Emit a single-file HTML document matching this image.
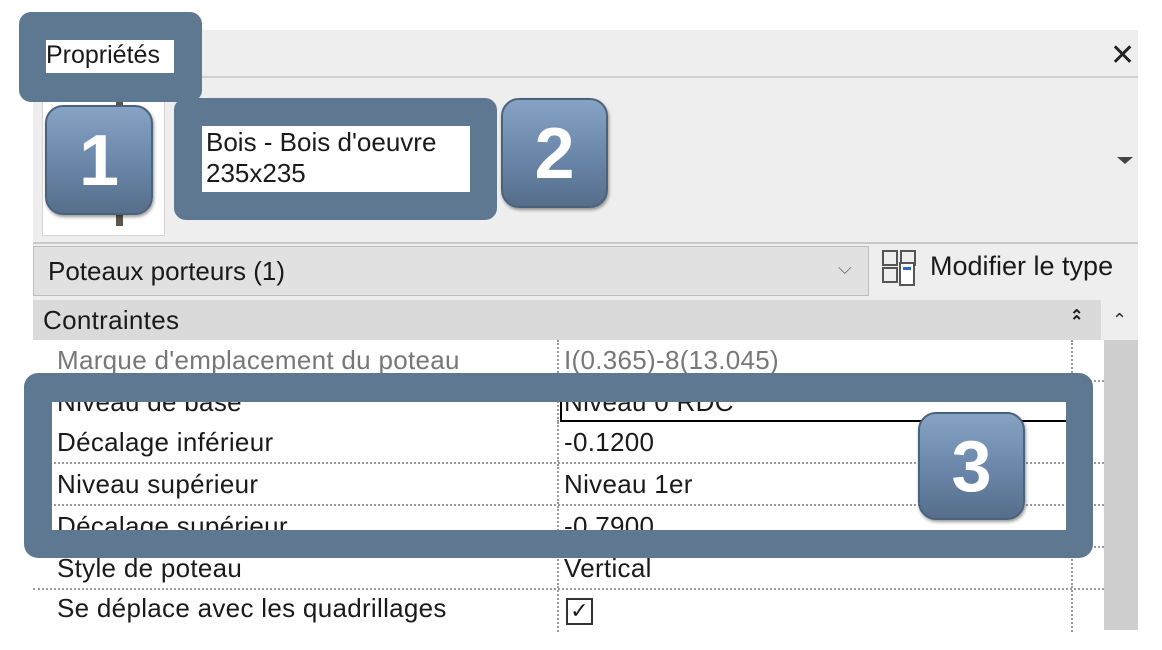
<!DOCTYPE html>
<html><head><meta charset="utf-8"><style>
*{margin:0;padding:0;box-sizing:border-box}
body{width:1162px;height:650px;background:#fff;position:relative;overflow:hidden;font-family:"Liberation Sans",sans-serif;color:#1a1a1a}
.abs{position:absolute}
.panel{left:33px;top:30px;width:1105px;height:600px;background:#eeeeee}
.row{position:absolute;left:33px;width:1071px;height:42px;background:#fff;border-bottom:2px dotted #9a9a9a;font-size:26px;letter-spacing:.3px}
.row .k{position:absolute;left:24px;top:5px}
.row .v{position:absolute;left:531px;top:5px}
.row .d1{position:absolute;left:524px;top:0;height:100%;border-left:2px dotted #9a9a9a}
.row .d2{position:absolute;left:1038px;top:0;height:100%;border-left:2px dotted #9a9a9a}
.call{background:#5f7892;border-radius:12px}
.badge{border-radius:18px;background:linear-gradient(#86a3c4,#6985a8 55%,#566e8b);border:2px solid #4c627c;color:#fff;font-weight:bold;font-size:72px;text-align:center;box-shadow:1px 2px 3px rgba(0,0,0,.4)}
</style></head><body>
<div class="abs panel"></div>
<div class="abs" style="left:33px;top:76px;width:1105px;height:2px;background:#d0d0d0"></div>
<div class="abs" style="left:1110px;top:38px;font-size:30px;color:#222">✕</div>
<div class="abs" style="left:42px;top:100px;width:123px;height:136px;background:#fff;border:1px solid #d5d5d5"></div>
<div class="abs" style="left:116px;top:102px;width:7px;height:124px;background:#5e544a"></div>
<div class="abs" style="left:1117px;top:157px;width:0;height:0;border-left:8px solid transparent;border-right:8px solid transparent;border-top:7px solid #444"></div>
<div class="abs" style="left:33px;top:242px;width:1105px;height:2px;background:#c8c8c8"></div>
<div class="abs" style="left:33px;top:246px;width:836px;height:50px;background:#e1e1e1;border:1px solid #bdbdbd;font-size:26px;padding:9px 0 0 14px">Poteaux porteurs (1)</div>
<div class="abs" style="left:838px;top:258px;font-size:18px;color:#666">⌵</div>
<svg class="abs" style="left:880px;top:248px" width="40" height="40" viewBox="0 0 40 40"><g fill="none" stroke="#555" stroke-width="2"><rect x="3" y="3" width="14" height="14"/><rect x="21" y="3" width="14" height="14"/><rect x="3" y="20" width="14" height="14"/><rect x="20" y="15" width="14" height="22" fill="#fff"/></g><rect x="23" y="19" width="8" height="3" fill="#2e6bbf"/></svg>
<div class="abs" style="left:930px;top:251px;font-size:27px">Modifier le type</div>
<div class="abs" style="left:33px;top:300px;width:1068px;height:41px;background:#dadada;font-size:26px;letter-spacing:.3px;padding:5px 0 0 10px">Contraintes</div>
<div class="abs" style="left:1070px;top:306px;font-size:16px;font-weight:bold">⌃</div>
<div class="abs" style="left:1070px;top:312px;font-size:16px;font-weight:bold">⌃</div>
<div class="abs" style="left:1112px;top:310px;font-size:18px;color:#333">⌃</div>
<div class="abs" style="left:1104px;top:340px;width:34px;height:290px;background:#cfcfcf"></div>
<div class="row" style="top:340px"><div class="d1"></div><div class="d2"></div><span class="k" style="color:#777">Marque d'emplacement du poteau</span><span class="v" style="color:#777">I(0.365)-8(13.045)</span></div>
<div class="row" style="top:382px"><div class="d1"></div><div class="d2"></div><span class="k">Niveau de base</span><div class="abs" style="left:527px;top:0;width:511px;height:40px;border-left:2px solid #000;border-bottom:2px solid #000"></div><span class="v">Niveau 0 RDC</span></div>
<div class="row" style="top:422px"><div class="d1"></div><div class="d2"></div><span class="k">Décalage inférieur</span><span class="v">-0.1200</span></div>
<div class="row" style="top:464px"><div class="d1"></div><div class="d2"></div><span class="k">Niveau supérieur</span><span class="v">Niveau 1er</span></div>
<div class="row" style="top:506px"><div class="d1"></div><div class="d2"></div><span class="k">Décalage supérieur</span><span class="v">-0.7900</span></div>
<div class="row" style="top:548px"><div class="d1"></div><div class="d2"></div><span class="k">Style de poteau</span><span class="v">Vertical</span></div>
<div class="row" style="top:590px;border-bottom:none"><div class="d1"></div><div class="d2"></div><span class="k" style="top:3px">Se déplace avec les quadrillages</span><div class="abs" style="left:533px;top:8px;width:27px;height:27px;border:2px solid #333;font-size:22px;line-height:22px;text-align:center">✓</div></div>
<div class="abs call" style="left:19px;top:12px;width:183px;height:90px"><div class="abs" style="left:27px;top:28px;width:128px;height:33px;background:#fff;font-size:25px;padding:1px 0 0 0;white-space:nowrap;overflow:hidden">Propriétés</div></div>
<div class="abs call" style="left:174px;top:98px;width:323px;height:122px"><div class="abs" style="left:28px;top:28px;width:268px;height:66px;background:#fff;font-size:26px;line-height:31px;padding:1px 0 0 4px;white-space:nowrap">Bois - Bois d'oeuvre<br>235x235</div></div>
<div class="abs" style="left:24px;top:373px;width:1069px;height:185px;border-style:solid;border-color:#5f7892;border-width:29px 27px 28px 28px;border-radius:14px"></div>
<div class="abs badge" style="left:45px;top:105px;width:108px;height:110px;line-height:108px">1</div>
<div class="abs badge" style="left:501px;top:98px;width:107px;height:110px;line-height:108px">2</div>
<div class="abs badge" style="left:918px;top:412px;width:107px;height:108px;line-height:106px">3</div>
</body></html>
